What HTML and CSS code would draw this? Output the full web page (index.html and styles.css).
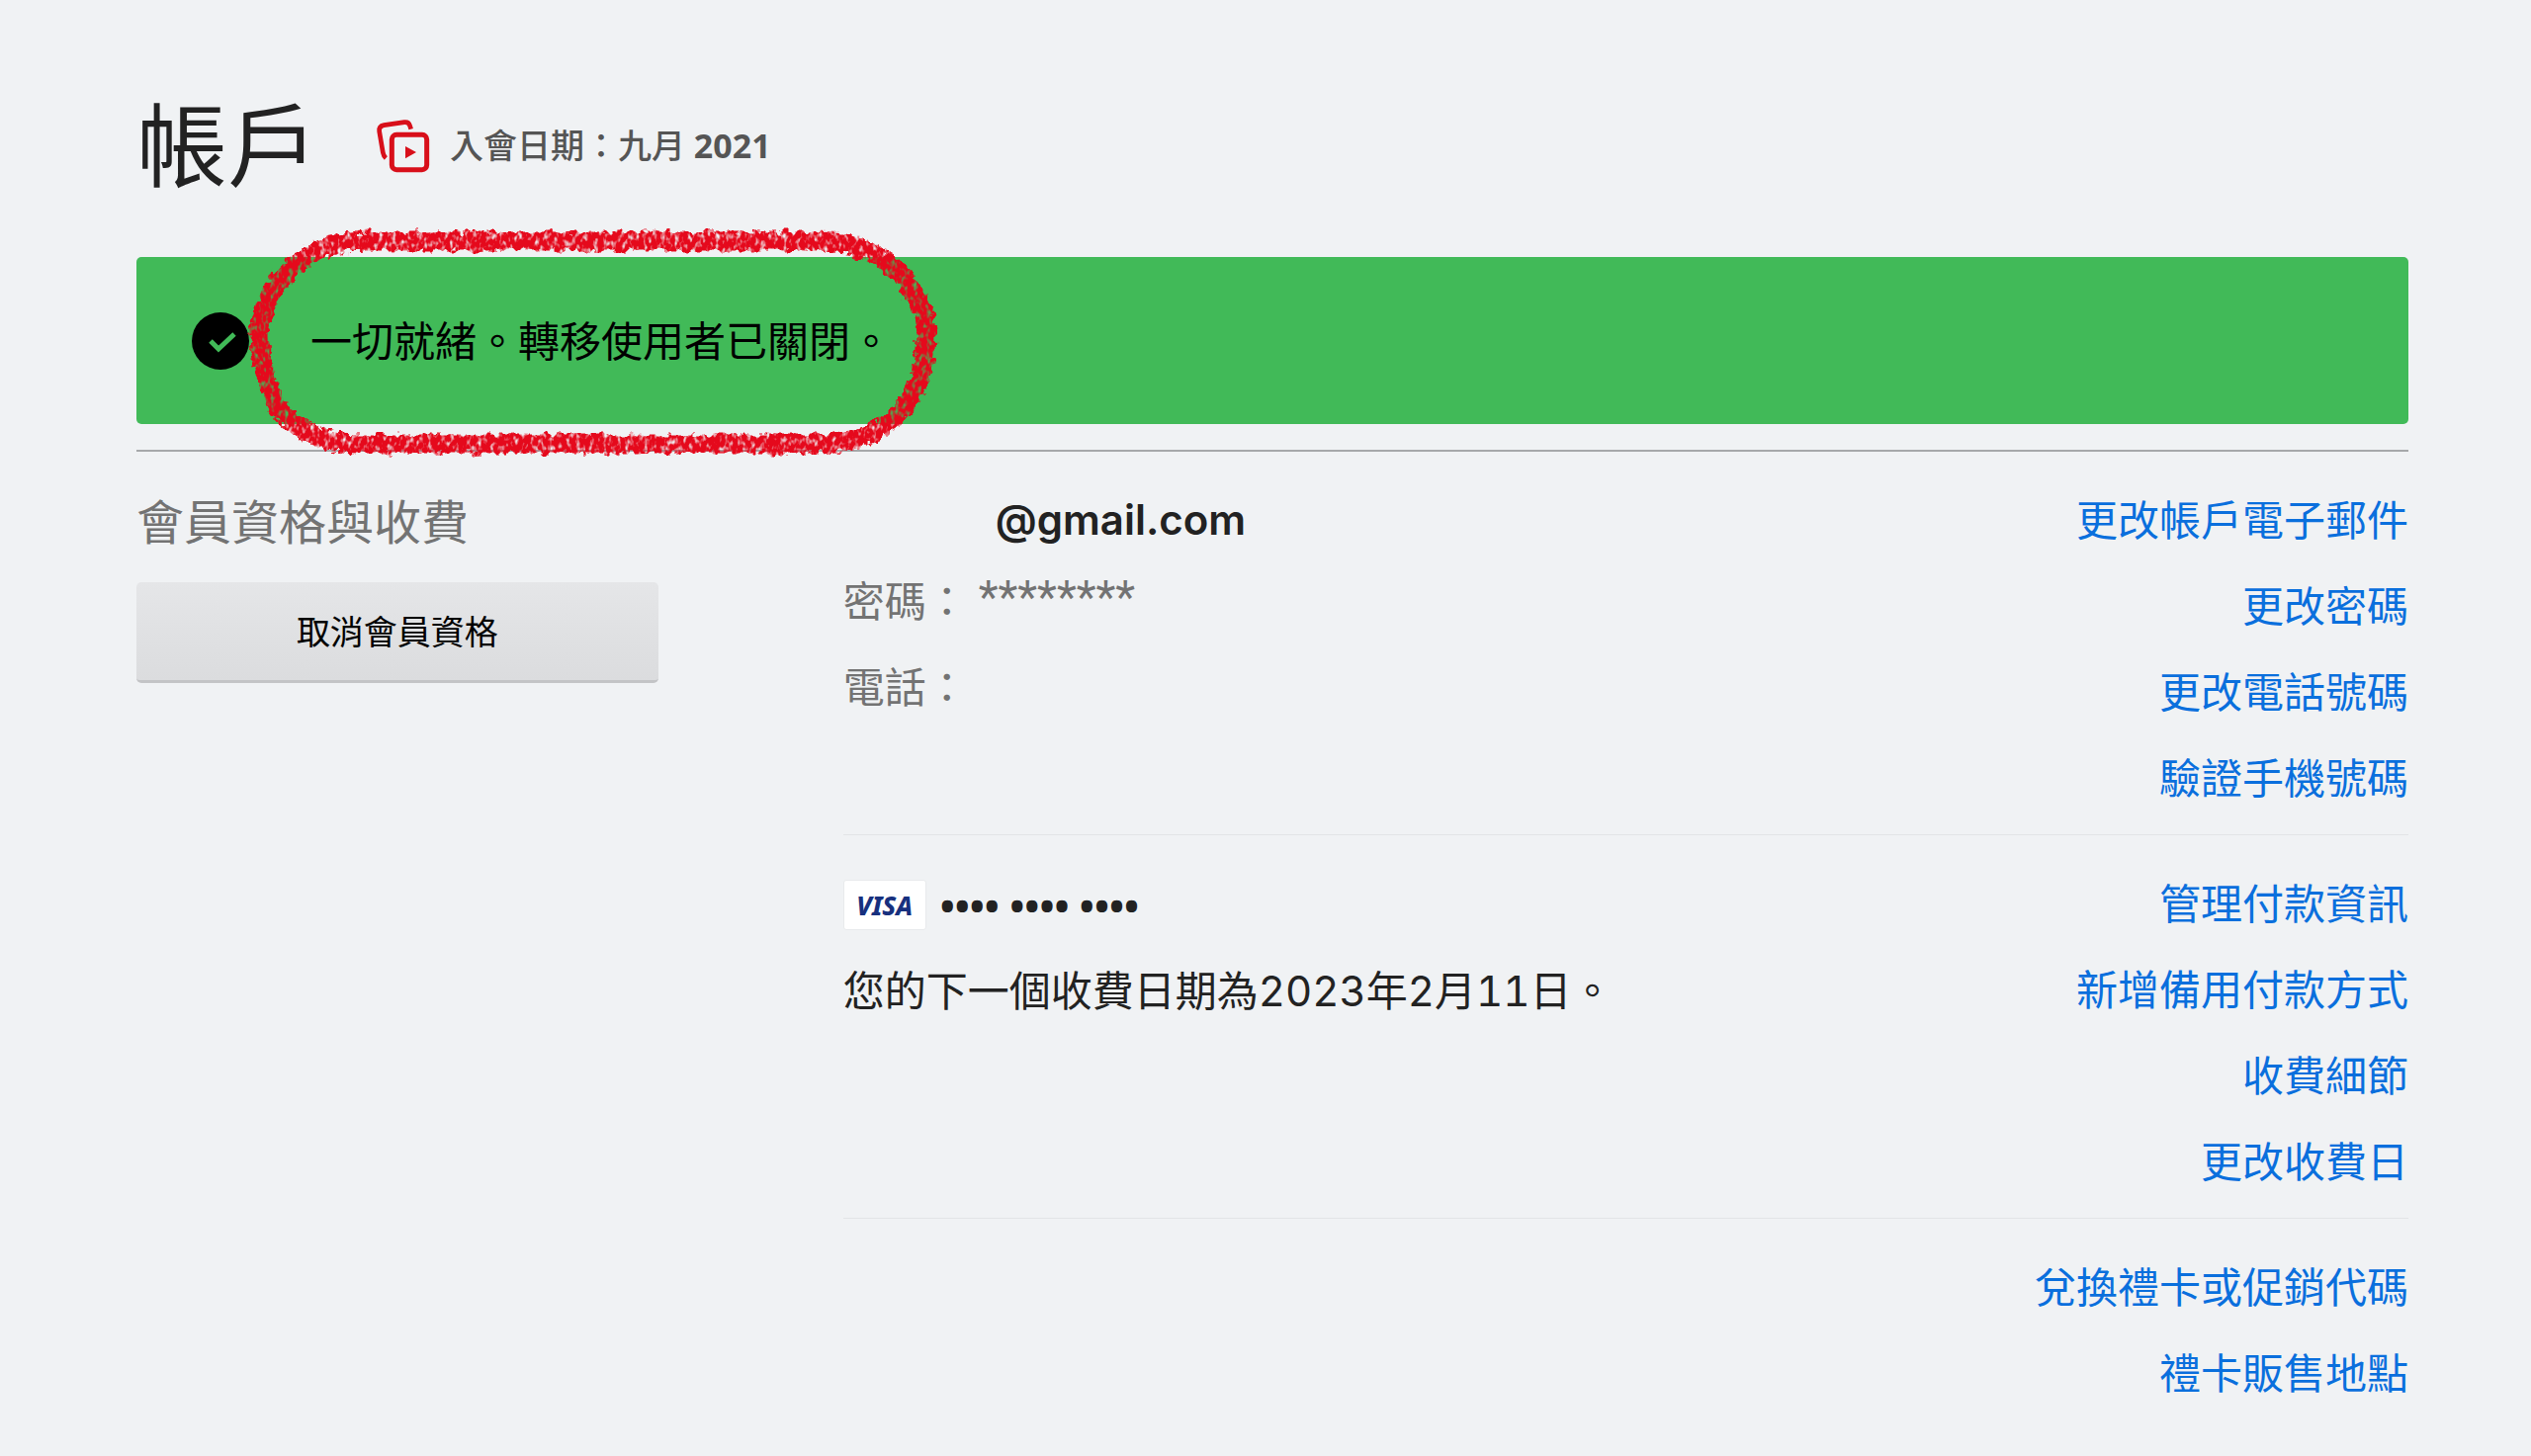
FILE: index.html
```
<!DOCTYPE html>
<html lang="zh-Hant">
<head>
  <meta charset="UTF-8">
  <meta name="viewport" content="width=device-width, initial-scale=1.0">
  <title>帳戶</title>
  <link rel="stylesheet" href="styles.css">
</head>
<body>
  <!-- Page header -->
  <header class="account-header">
    <h1>帳戶</h1>
    <div class="member-since">
      <svg class="member-icon" viewBox="60 60 165 165" aria-hidden="true">
        <path d="M167 92 L164 82 Q160 69 147 71 L85 80 Q69 83 71 99 L82 163 Q84 174 91 180" fill="none" stroke="#d80f1a" stroke-width="14"/>
        <rect x="109" y="109" width="106" height="106" rx="14" fill="none" stroke="#d80f1a" stroke-width="15"/>
        <path d="M150 144 L183 162 L150 181 Z" fill="#d80f1a"/>
      </svg>
      <span>入會日期：九月 <b>2021</b></span>
    </div>
  </header>

  <main>
    <!-- Success message -->
    <div class="alert" role="status">
      <svg class="alert-icon" viewBox="0 0 58 58" aria-hidden="true">
        <circle cx="29" cy="29" r="29" fill="#000"/>
        <path d="M19 29 L27 37 L43 22" fill="none" stroke="#41ba58" stroke-width="5"/>
      </svg>
      <p>一切就緒。轉移使用者已關閉。</p>

      <!-- Crayon ring around the message -->
      <svg class="ring" viewBox="0 0 720 250" aria-hidden="true">
        <defs>
          <filter id="crayon" x="0" y="0" width="720" height="250" filterUnits="userSpaceOnUse" color-interpolation-filters="sRGB">
            <feTurbulence type="fractalNoise" baseFrequency="0.14" numOctaves="2" seed="4" result="edge"/>
            <feDisplacementMap in="SourceGraphic" in2="edge" scale="13" xChannelSelector="R" yChannelSelector="G" result="rough"/>
            <feTurbulence type="fractalNoise" baseFrequency="0.22 0.14" numOctaves="2" seed="9"/>
            <feColorMatrix values="0 0 0 0 0  0 0 0 0 0  0 0 0 0 0  3 0 0 0 -0.5" result="grain"/>
            <feComposite in="rough" in2="grain" operator="in"/>
          </filter>
        </defs>
        <path filter="url(#crayon)" d="M130 22 L584 22 C666 22 693 84 695 116 C695 160 676 227 584 227 L120 227 C38 227 20 160 20 116 C22 84 48 22 130 22 Z" fill="none" stroke="#e5091c" stroke-width="19"/>
      </svg>
    </div>

    <div class="account-section">
      <section class="membership">
        <h2>會員資格與收費</h2>
        <button type="button" class="cancel-btn">取消會員資格</button>
      </section>

      <div class="details">
        <section class="group">
          <div class="info">
            <p class="email">@gmail.com</p>
            <p class="muted">密碼： <span class="stars">********</span></p>
            <p class="muted">電話：</p>
          </div>
          <ul class="links">
            <li><a href="#">更改帳戶電子郵件</a></li>
            <li><a href="#">更改密碼</a></li>
            <li><a href="#">更改電話號碼</a></li>
            <li><a href="#">驗證手機號碼</a></li>
          </ul>
        </section>

        <section class="group">
          <div class="info">
            <p class="card">
              <span class="visa">VISA</span>
              <span class="dots">•••• •••• ••••</span>
            </p>
            <p class="next-bill">您的下一個收費日期為2023年2月11日。</p>
          </div>
          <ul class="links">
            <li><a href="#">管理付款資訊</a></li>
            <li><a href="#">新增備用付款方式</a></li>
            <li><a href="#">收費細節</a></li>
            <li><a href="#">更改收費日</a></li>
          </ul>
        </section>

        <section class="group">
          <ul class="links">
            <li><a href="#">兌換禮卡或促銷代碼</a></li>
            <li><a href="#">禮卡販售地點</a></li>
          </ul>
        </section>
      </div>
    </div>
  </main>
</body>
</html>
```

FILE: styles.css
```
* {
  margin: 0;
  padding: 0;
  box-sizing: border-box;
}

body {
  background: #f0f2f4;
  color: #222;
  font-family: "Noto Sans", "Noto Sans CJK TC", sans-serif;
  font-size: 42px;
  line-height: 87px;
  padding: 99px 124px 0 138px;
}

/* Header */
.account-header {
  display: flex;
  align-items: center;
  height: 96px;
  margin-bottom: 65px;
}

.account-header h1 {
  font-size: 92px;
  font-weight: 400;
  line-height: 96px;
  margin: 0 58px 0 0;
}

.member-since {
  display: flex;
  align-items: center;
  gap: 20px;
  color: #555;
  font-size: 34px;
  font-weight: 500;
}

.member-icon {
  width: 55px;
  height: 55px;
}

/* Green alert */
.alert {
  position: relative;
  display: flex;
  align-items: center;
  gap: 62px;
  height: 169px;
  padding: 0 56px;
  background: #41ba58;
  border-radius: 5px;
  color: #000;
}

.alert-icon {
  width: 58px;
  height: 58px;
}

.ring {
  position: absolute;
  left: 104px;
  top: -38px;
  width: 720px;
  height: 250px;
  pointer-events: none;
}

/* Account details */
.account-section {
  display: grid;
  grid-template-columns: 23fr 69fr;
  column-gap: 187px;
  margin-top: 26px;
  border-top: 2px solid #a6a8aa;
}

.membership {
  padding-top: 25px;
}

.membership h2 {
  color: #737373;
  font-size: 48px;
  font-weight: 400;
  line-height: 92px;
}

.cancel-btn {
  width: 100%;
  height: 102px;
  margin-top: 15px;
  padding-bottom: 2px;
  background: linear-gradient(#e5e6e8, #dbdcde);
  border: none;
  border-bottom: 3px solid #c3c4c6;
  border-radius: 5px;
  color: #000;
  font-family: inherit;
  font-size: 34px;
}

.group {
  display: flex;
  justify-content: space-between;
  padding: 25px 0 14px;
}

.group + .group {
  border-top: 1px solid #e2e4e6;
}

.email {
  height: 82px;
  padding-left: 154px;
  font-family: Inter, sans-serif;
  font-weight: 600;
}

.muted {
  color: #737373;
}

.stars {
  font-family: Roboto, sans-serif;
  font-size: 46px;
  line-height: 1;
  vertical-align: 4px;
}

.card {
  display: flex;
  align-items: center;
  gap: 14px;
  margin-top: 2px;
}

.visa {
  width: 84px;
  height: 51px;
  background: #fff;
  border: 1px solid #e8eaec;
  border-radius: 3px;
  color: #17307e;
  font-size: 26px;
  font-style: italic;
  font-weight: 800;
  line-height: 50px;
  text-align: center;
}

.dots {
  font-size: 40px;
  font-weight: 700;
}

.next-bill {
  font-family: Inter, "Noto Sans CJK TC", sans-serif;
  font-variant-numeric: tabular-nums;
}

.links {
  list-style: none;
  margin-left: auto;
  text-align: right;
}

.links a {
  color: #0a6fdd;
  text-decoration: none;
}

.links a:hover {
  text-decoration: underline;
}
```
